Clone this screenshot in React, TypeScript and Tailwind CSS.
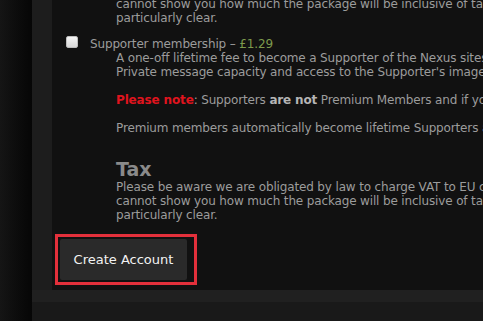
export default function App() {
  const body = 'text-[12px] leading-[14px] tracking-[-0.15px] text-[#9c9c9c] whitespace-nowrap';

  return (
    <div
      className="flex h-[321px] w-[483px] overflow-hidden bg-[#0a0a0a]"
      style={{ fontFamily: '"DejaVu Sans", Verdana, sans-serif' }}
    >
      {/* page background */}
      <div className="w-[32px] shrink-0 bg-gradient-to-r from-[#151515] to-[#060606]" />

      {/* content panel */}
      <div className="flex min-w-0 flex-1 flex-col bg-[#1d1d1d]">
        <div className="ml-[20px] h-[290px] overflow-hidden bg-[#111111]">
          <div className="-mt-[3px] pl-[64px]">
            <p className={body}>cannot show you how much the package will be inclusive of tax as the tax rates are not</p>
            <p className={body}>particularly clear.</p>
          </div>

          {/* supporter option */}
          <div className="mt-[12px] flex items-start pl-[14px]">
            <div className="-mt-[1px] h-[12px] w-[12px] shrink-0 rounded-[2px] border border-[#bdbdbd] bg-gradient-to-b from-[#f4f4f4] to-[#d9d9d9]" />
            <div className="ml-[12px]">
              <p className={body}>
                Supporter membership – <span className="text-[#7d9a4c]">£1.29</span>
              </p>
              <div className="pl-[26px]">
                <p className={body}>A one-off lifetime fee to become a Supporter of the Nexus sites, giving you</p>
                <p className={body}>Private message capacity and access to the Supporter's image share.</p>
                <p className={`${body} mt-[14px]`}>
                  <span className="font-bold text-[#e0141e]">Please note</span>: Supporters{' '}
                  <span className="font-bold text-[#b5b5b5]">are not</span> Premium Members and if you want
                </p>
                <p className={`${body} mt-[14px]`}>Premium members automatically become lifetime Supporters as well.</p>
              </div>
            </div>
          </div>

          {/* tax */}
          <div className="mt-[23px] pl-[64px]">
            <h2 className="text-[19px] font-bold leading-[22px] text-[#8a8a8a]">Tax</h2>
            <p className={body}>Please be aware we are obligated by law to charge VAT to EU citizens. We</p>
            <p className={body}>cannot show you how much the package will be inclusive of tax as the tax rates are not</p>
            <p className={body}>particularly clear.</p>
          </div>

          <div className="mt-[12px] pl-[3px]">
            <div className="inline-flex border-[3px] border-[#e3303b] py-[2px] pl-[2px] pr-[7px]">
              <button className="h-[41px] w-[127px] rounded-[2px] bg-[#2a2a2a] text-[13px] text-[#f2f2f2]">
                Create Account
              </button>
            </div>
          </div>
        </div>
        <div className="h-[12px] bg-[#202020]" />
        <div className="flex-1 bg-[#191919]" />
      </div>
    </div>
  );
}
